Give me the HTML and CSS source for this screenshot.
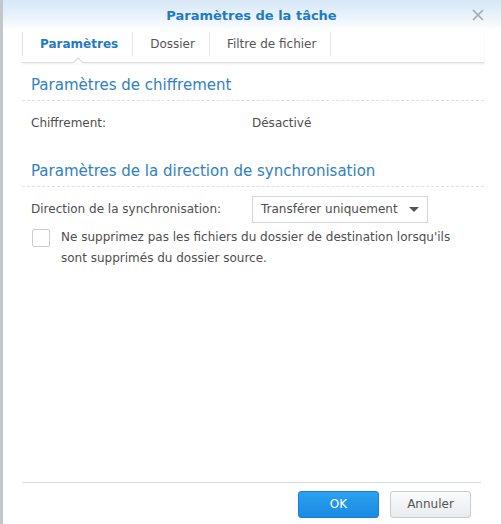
FILE: index.html
```html
<!DOCTYPE html>
<html lang="fr">
<head>
    <meta charset="UTF-8">
    <title>Paramètres de la tâche</title>
    <link rel="stylesheet" href="styles.css">
</head>
<body>
    <div class="dialog">
        <div class="header">
            <div class="title">Paramètres de la tâche</div>
            <svg class="close" width="14" height="14" viewBox="0 0 14 14">
                <path d="M2 2 L12 12 M12 2 L2 12" stroke="#a3a8ad" stroke-width="1.6" fill="none"/>
            </svg>
        </div>
        <div class="tabs">
            <div class="tab active">Paramètres</div>
            <div class="tab">Dossier</div>
            <div class="tab">Filtre de fichier</div>
        </div>
        <div class="content">
            <div class="section-title">Paramètres de chiffrement</div>
            <div class="row">
                <div class="label">Chiffrement:</div>
                <div class="value">Désactivé</div>
            </div>

            <div class="section-title second">Paramètres de la direction de synchronisation</div>
            <div class="row">
                <div class="label">Direction de la synchronisation:</div>
                <div class="select">
                    <span>Transférer uniquement</span>
                    <span class="caret"></span>
                </div>
            </div>
            <div class="check-row">
                <div class="checkbox"></div>
                <div class="check-text">Ne supprimez pas les fichiers du dossier de destination lorsqu'ils sont supprimés du dossier source.</div>
            </div>
        </div>
        <div class="footer">
            <button class="btn primary">OK</button>
            <button class="btn">Annuler</button>
        </div>
    </div>
</body>
</html>
```

FILE: styles.css
```css
html, body {
    margin: 0;
    padding: 0;
    background: #fff;
}
body {
    font-family: "DejaVu Sans", Verdana, sans-serif;
    font-size: 12px;
    color: #4e4e4e;
}
.dialog {
    width: 498px;
    height: 524px;
    border-left: 3px solid #c4c7ca;
    display: flex;
    flex-direction: column;
    background: #fff;
}
.header {
    height: 31px;
    display: flex;
    align-items: center;
    justify-content: center;
    position: relative;
    background: linear-gradient(to bottom, #d6e7f7 0%, #eaf3fb 55%, #ffffff 100%);
}
.title {
    font-weight: bold;
    font-size: 13px;
    color: #1f7bc3;
    margin-left: -1px;
}
.close {
    position: absolute;
    right: 16px;
    top: 8px;
}
.tabs {
    display: flex;
    margin: 1px 17px 0 19px;
    height: 30px;
    border-bottom: 1px solid #dcdfe2;
    box-shadow: 0 1px 2px rgba(0, 0, 0, 0.08);
}
.tab {
    height: 24px;
    line-height: 24px;
    padding: 0 14px 0 17px;
    border-left: 1px solid #e3e5e7;
    font-size: 12px;
    color: #555;
}
.tab:last-child {
    border-right: 1px solid #e3e5e7;
}
.tab.active {
    color: #1f7bc3;
    font-weight: bold;
    position: relative;
}
.tab.active::after {
    content: "";
    position: absolute;
    left: 50%;
    bottom: -7px;
    margin-left: -6px;
    border: 6px solid transparent;
    border-top: none;
    border-bottom-color: #dcdfe2;
}
.tab.active::before {
    content: "";
    position: absolute;
    left: 50%;
    bottom: -8px;
    margin-left: -5px;
    border: 5px solid transparent;
    border-top: none;
    border-bottom-color: #fff;
    z-index: 1;
}
.content {
    flex: 1;
    margin: 0 17px 0 19px;
}
.section-title {
    font-size: 15px;
    color: #2f80c4;
    padding: 13px 0 6px 9px;
    border-bottom: 1px dashed #dde1e4;
}
.section-title.second {
    margin-top: 12px;
}
.row {
    display: flex;
    align-items: center;
    padding-left: 9px;
    margin-top: 8px;
    min-height: 28px;
}
.label {
    width: 221px;
}
.select {
    width: 158px;
    height: 25px;
    border: 1px solid #d4d7da;
    display: flex;
    align-items: center;
    justify-content: space-between;
    padding: 0 8px 0 8px;
    color: #4e4e4e;
}
.caret {
    width: 0;
    height: 0;
    border-left: 5px solid transparent;
    border-right: 5px solid transparent;
    border-top: 5px solid #555;
}
.check-row {
    display: flex;
    padding-left: 10px;
    margin-top: 4px;
}
.checkbox {
    width: 16px;
    height: 16px;
    border: 1px solid #c9ccd0;
    border-radius: 2px;
    flex: none;
    margin-top: 2px;
}
.check-text {
    margin-left: 11px;
    line-height: 21px;
    width: 400px;
}
.footer {
    margin: 0 20px 0 19px;
    padding-right: 10px;
    border-top: 1px solid #d8dbde;
    height: 41px;
    display: flex;
    justify-content: flex-end;
    align-items: center;
    gap: 11px;
}
.btn {
    width: 81px;
    height: 27px;
    border: 1px solid #c8ccd0;
    border-radius: 3px;
    background: linear-gradient(to bottom, #fafbfc, #e9ecef);
    font-family: "DejaVu Sans", Verdana, sans-serif;
    font-size: 12px;
    color: #555;
    cursor: pointer;
    margin-top: 1px;
}
.btn.primary {
    background: linear-gradient(to bottom, #2aa1f0, #1a8ae3);
    border-color: #1a80d4;
    color: #fff;
}
```
